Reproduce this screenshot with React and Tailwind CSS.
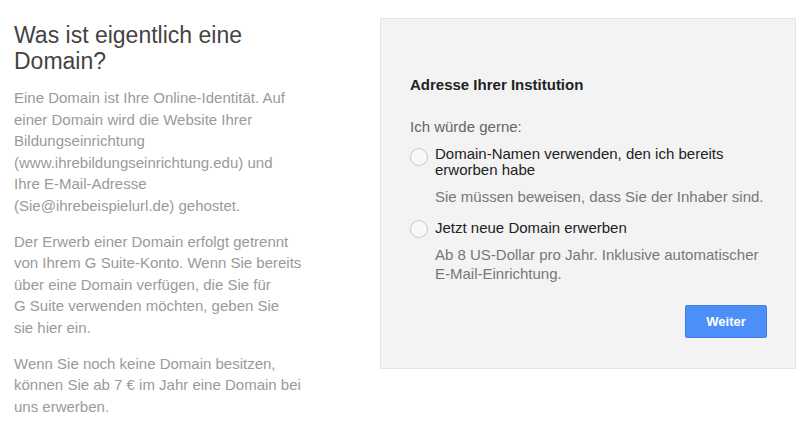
export default function App() {
  return (
    <div className="w-[810px] h-[428px] bg-white overflow-hidden font-['Liberation_Sans',Arial,sans-serif]">
      <div className="flex items-start pt-[18px]">
        {/* Left column */}
        <div className="w-[300px] ml-[14px] mt-[4px]">
          <h1 className="text-[23px] leading-[26px] text-[#444] font-normal">
            Was ist eigentlich eine<br />Domain?
          </h1>
          <div className="mt-[13px] text-[15px] leading-[21.6px] text-[#9a9a9a]">
            <p>
              Eine Domain ist Ihre Online-Identität. Auf<br />
              einer Domain wird die Website Ihrer<br />
              Bildungseinrichtung<br />
              (www.ihrebildungseinrichtung.edu) und<br />
              Ihre E-Mail-Adresse<br />
              (Sie@ihrebeispielurl.de) gehostet.
            </p>
            <p className="mt-[14px]">
              Der Erwerb einer Domain erfolgt getrennt<br />
              von Ihrem G Suite-Konto. Wenn Sie bereits<br />
              über eine Domain verfügen, die Sie für<br />
              G Suite verwenden möchten, geben Sie<br />
              sie hier ein.
            </p>
            <p className="mt-[14px]">
              Wenn Sie noch keine Domain besitzen,<br />
              können Sie ab 7 € im Jahr eine Domain bei<br />
              uns erwerben.
            </p>
          </div>
        </div>

        {/* Right panel */}
        <div className="ml-[66px] w-[416px] h-[351px] bg-[#f3f3f3] border border-[#e3e3e3] pl-[29px] pr-[28px] pt-[57px]">
          <h2 className="text-[15px] leading-[18px] font-bold text-[#222]">Adresse Ihrer Institution</h2>
          <p className="mt-[24px] text-[15px] leading-[18px] text-[#666]">Ich würde gerne:</p>

          <div className="mt-[10px] flex gap-[7px]">
            <span className="mt-[2px] w-[18px] h-[18px] shrink-0 rounded-full border border-[#c8c8c8] bg-white/40" />
            <div>
              <p className="text-[15px] leading-[16px] text-[#222]">
                Domain-Namen verwenden, den ich bereits<br />erworben habe
              </p>
              <p className="mt-[9px] text-[15px] leading-[19px] text-[#777]">
                Sie müssen beweisen, dass Sie der Inhaber sind.
              </p>
            </div>
          </div>

          <div className="mt-[13px] flex gap-[7px]">
            <span className="mt-[1px] w-[18px] h-[18px] shrink-0 rounded-full border border-[#c8c8c8] bg-white/40" />
            <div>
              <p className="text-[15px] leading-[18px] text-[#222]">Jetzt neue Domain erwerben</p>
              <p className="mt-[8px] text-[15px] leading-[19px] text-[#777]">
                Ab 8 US-Dollar pro Jahr. Inklusive automatischer<br />E-Mail-Einrichtung.
              </p>
            </div>
          </div>

          <div className="mt-[22px] flex justify-end">
            <button className="w-[82px] h-[33px] rounded-[2px] bg-[#4d8ff9] border border-[#3f7fe8] text-white text-[13px] font-bold">
              Weiter
            </button>
          </div>
        </div>
      </div>
    </div>
  );
}
